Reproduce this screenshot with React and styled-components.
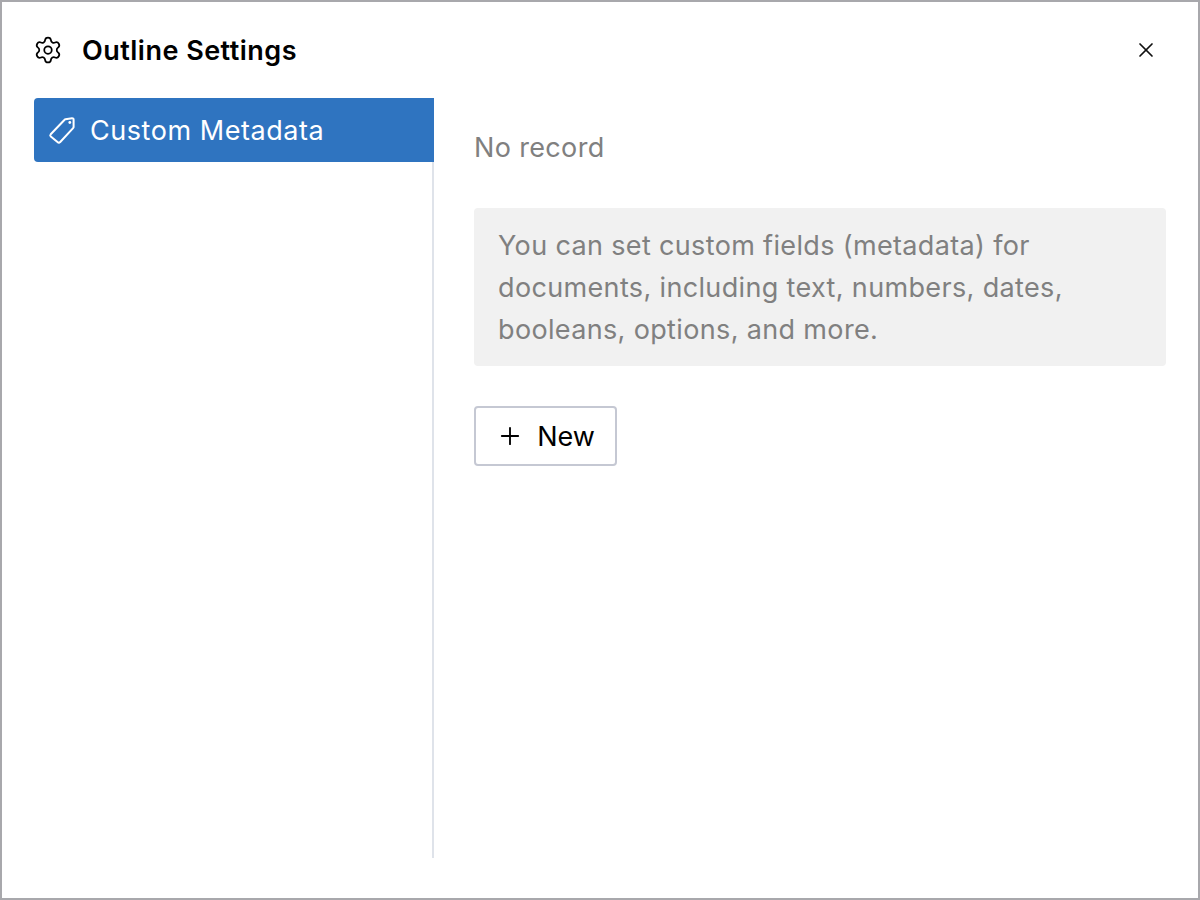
import React from 'react';
import styled, { createGlobalStyle } from 'styled-components';
import { Settings, Plus, X } from 'lucide-react';

const GlobalStyle = createGlobalStyle`
  html, body {
    margin: 0;
    padding: 0;
    background: #fff;
  }
  * {
    box-sizing: border-box;
  }
`;

const Dialog = styled.div`
  width: 1200px;
  height: 900px;
  display: flex;
  flex-direction: column;
  border: 2px solid #a8a8ac;
  background: #fff;
  font-family: Inter, 'Liberation Sans', Arial, sans-serif;
  font-size: 27px;
  letter-spacing: 0.55px;
`;

const Header = styled.header`
  height: 96px;
  display: flex;
  align-items: center;
  justify-content: space-between;
  padding: 0 40px 0 31px;
`;

const TitleGroup = styled.div`
  display: flex;
  align-items: center;
  gap: 19px;
  color: #000;
`;

const Title = styled.h1`
  margin: 0;
  font-size: 27px;
  font-weight: 600;
  letter-spacing: 0.48px;
`;

const CloseButton = styled.button`
  display: flex;
  padding: 0;
  border: 0;
  background: none;
  color: #111;
`;

const Body = styled.div`
  height: 760px;
  display: flex;
  padding-left: 32px;
`;

const Sidebar = styled.nav`
  width: 400px;
  border-right: 2px solid #dfe3ea;
`;

const MenuItem = styled.div`
  height: 64px;
  margin-right: -2px;
  display: flex;
  align-items: center;
  gap: 10px;
  padding-left: 10px;
  border-radius: 4px 0 0 4px;
  background: #2f74c0;
  color: #fff;
`;

const Content = styled.main`
  width: 692px;
  margin-left: 40px;
  display: flex;
  flex-direction: column;
  align-items: flex-start;
  padding-top: 32px;
`;

const Empty = styled.div`
  height: 36px;
  line-height: 36px;
  letter-spacing: 0.35px;
  color: #808080;
`;

const Note = styled.div`
  width: 100%;
  margin-top: 42px;
  padding: 17px 24px 15px;
  border-radius: 4px;
  background: #f1f1f1;
  color: #808080;
  line-height: 42px;
  letter-spacing: 0.35px;
`;

const AddButton = styled.button`
  width: 143px;
  height: 60px;
  margin-top: 40px;
  display: flex;
  align-items: center;
  justify-content: center;
  gap: 13px;
  border: 2px solid #c5c8d3;
  border-radius: 4px;
  background: #fff;
  color: #000;
  font: inherit;
`;

const TagIcon = () => (
  <svg width="36" height="36" viewBox="0 0 36 36" fill="none" stroke="currentColor" strokeWidth="2" strokeLinejoin="round">
    <path d="M21.5 7.2L28 6.2a1.5 1.5 0 0 1 1.6 1.5V15a1.5 1.5 0 0 1-.5 1.1L16 30.2a1.5 1.5 0 0 1-2.2.1L6.8 24.4a1.5 1.5 0 0 1-.1-2.1L20.6 7.7a1.5 1.5 0 0 1 .9-.5Z" />
    <circle cx="25.8" cy="10.5" r="1.4" fill="currentColor" stroke="none" />
  </svg>
);

export default function App() {
  return (
    <>
      <GlobalStyle />
      <Dialog>
        <Header>
          <TitleGroup>
            <Settings size={30} strokeWidth={1.4} />
            <Title>Outline Settings</Title>
          </TitleGroup>
          <CloseButton>
            <X size={24} strokeWidth={1.7} />
          </CloseButton>
        </Header>
        <Body>
          <Sidebar>
            <MenuItem>
              <TagIcon />
              Custom Metadata
            </MenuItem>
          </Sidebar>
          <Content>
            <Empty>No record</Empty>
            <Note>
              You can set custom fields (metadata) for
              <br />
              documents, including text, numbers, dates,
              <br />
              booleans, options, and more.
            </Note>
            <AddButton>
              <Plus size={28} strokeWidth={1.6} />
              New
            </AddButton>
          </Content>
        </Body>
      </Dialog>
    </>
  );
}
